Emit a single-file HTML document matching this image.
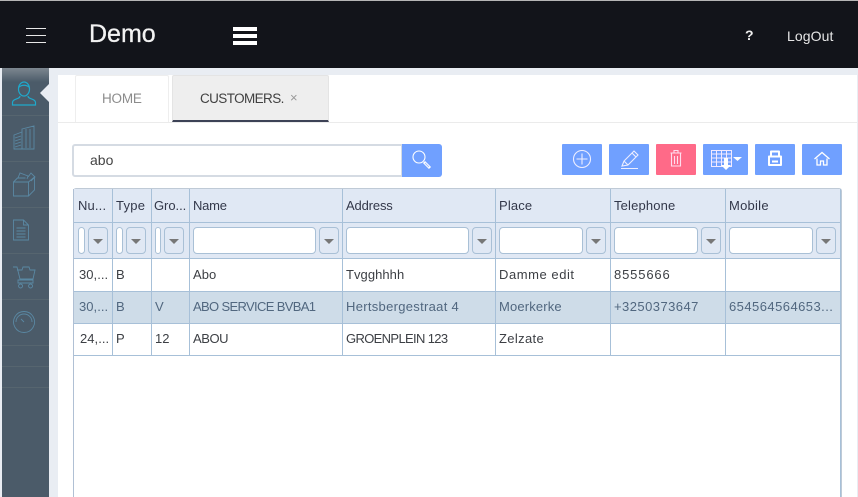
<!DOCTYPE html>
<html><head><meta charset="utf-8"><style>
html,body{margin:0;padding:0;background:#fff}
body{width:858px;height:497px;overflow:hidden;position:relative;font-family:"Liberation Sans",sans-serif;color:#3c3f44}
div,svg,span{position:absolute;box-sizing:border-box}
.t{white-space:nowrap;font-size:13px;line-height:16px}
.h{color:#33384a}
.s{color:#51677f}
.vl{width:1px;background:#a7c0d8;top:189px;height:308px}
.hl{height:1px;background:#a7c0d8;left:74px;width:767px}
.btn{top:144px;height:31px;background:#70a0ff;border-radius:1px}
.f{top:227px;height:27px;background:#fff;border:1px solid #a9c0d6;border-radius:4px}
.d{top:227px;width:20px;height:27px;background:#e0e8f4;border:1px solid #a9c0d6;border-radius:4px}
.d:after{content:"";position:absolute;left:4px;top:11px;border-left:5px solid transparent;border-right:5px solid transparent;border-top:5px solid #777}
.sep{left:2px;width:47px;height:1px;background:#56656f}
svg{overflow:visible}
</style></head><body>
<div style="left:0;top:0;width:858px;height:1px;background:#b5b5b5"></div>
<div style="left:0;top:1px;width:858px;height:67px;background:#12141a"></div>
<div style="left:26px;top:28px;width:20px;height:1px;background:#e8e8e8"></div>
<div style="left:26px;top:35px;width:20px;height:1px;background:#e8e8e8"></div>
<div style="left:26px;top:42px;width:20px;height:1px;background:#e8e8e8"></div>
<div class="t" style="left:89px;top:20px;font-size:25px;line-height:28px;color:#f2f2f2;-webkit-text-stroke:.3px #f2f2f2">Demo</div>
<div style="left:233px;top:27px;width:24px;height:4px;background:#fff"></div>
<div style="left:233px;top:34px;width:24px;height:4px;background:#fff"></div>
<div style="left:233px;top:41px;width:24px;height:4px;background:#fff"></div>
<div class="t" style="left:745px;top:27px;font-size:14px;font-weight:bold;color:#eee">?</div>
<div class="t" style="left:787px;top:28px;font-size:14px;color:#e6e6e6;letter-spacing:.1px">LogOut</div>

<div style="left:0;top:68px;width:858px;height:429px;background:#e9edf3"></div>
<div style="left:2px;top:68px;width:47px;height:429px;background:#4b5b69"></div>
<div style="left:2px;top:68px;width:47px;height:14px;background:linear-gradient(#7d8790,#4b5b69)"></div>
<div class="sep" style="top:115px"></div><div class="sep" style="top:161px"></div><div class="sep" style="top:207px"></div><div class="sep" style="top:253px"></div><div class="sep" style="top:299px"></div><div class="sep" style="top:345px"></div><div class="sep" style="top:366px"></div><div class="sep" style="top:387px"></div>
<div style="left:40px;top:84px;border-top:9px solid transparent;border-bottom:9px solid transparent;border-right:9px solid #e9edf3"></div>

<svg style="left:0;top:68px" width="50" height="300" fill="none" stroke="#5a88a3" stroke-width=".9">
<g stroke="#1fa9cc" stroke-width="1.200"><ellipse cx="24" cy="21" rx="5.500" ry="7"/><path d="M18.500 19.500c3-3 8-3 11 0M20 28c0 3.500-7.500 2.500-7.500 6.500v2.500h23v-2.500c0-4-7.500-3-7.500-6.500"/></g>
<path d="M14 81V67l8-3v17h-8zM22 61l12-3v23H22V61zM15 70l6-2M15 73l6-2M15 76l6-2M15 79l6-2M26 61v19M30 61v19"/>
<path d="M13.500 114v14h15v-14h-15zM28.500 114l6-5v13l-6 6M13.500 114l4-4h8M18 110l2-5 8 3-1 3M28 109l3-4 4 4-4 4"/>
<path d="M13.500 152h10l5 5v15h-15v-20zM23.500 152v5h5M16.500 160h9M16.500 163h9M16.500 166h9M16.500 169h9"/>
<path d="M13 199h4l3 12h13l2-9h-5l-1-3h-6l-1 3h-5M18 212h15v3H18zM20.500 216a2 2 0 1 0 .1 0M30.500 216a2 2 0 1 0 .1 0"/>
<path d="M24 243.500a10.500 10.500 0 1 0 .1 0zM16 254a8 8 0 0 1 16 0M21 251l3 3"/>
</svg>

<div style="left:58px;top:75px;width:799px;height:422px;background:#fff"></div>
<div style="left:58px;top:122px;width:799px;height:1px;background:#ebebeb"></div>
<div style="left:75px;top:75px;width:94px;height:47px;background:#fff;border:1px solid #eee;border-bottom:0;border-radius:2px 2px 0 0"></div>
<div class="t" style="left:102px;top:91px;font-size:13.500px;color:#8c8c8c;letter-spacing:-.2px">HOME</div>
<div style="left:172px;top:75px;width:157px;height:47px;background:#eee;border:1px solid #e4e4e4;border-bottom:2px solid #3d4256;border-radius:2px 2px 0 0"></div>
<div class="t" style="left:200px;top:91px;font-size:13.500px;color:#414141;letter-spacing:-.6px">CUSTOMERS.</div>
<div class="t" style="left:290px;top:90px;font-size:13px;color:#999">×</div>

<div style="left:72px;top:144px;width:331px;height:33px;background:#fff;border:2px solid #d5dbe3;border-radius:3px 0 0 3px"></div>
<div class="t" style="left:90px;top:152px;font-size:14px;color:#444">abo</div>
<div class="btn" style="left:402px;height:33px;width:40px;border-radius:0 3px 3px 0">
<svg style="left:0;top:0" width="40" height="33" fill="none" stroke="#fff"><circle cx="17" cy="13" r="6" stroke-width="1.100"/><path d="M22 18l6 6" stroke-width="3"/><path d="M23 19l4 4" stroke="#9fbfff" stroke-width="1"/></svg></div>

<div class="btn" style="left:562px;width:40px"><svg style="left:0;top:0" width="40" height="31" fill="none" stroke="#eef" stroke-width="1.100"><circle cx="20" cy="15" r="8.500"/><path d="M20 9.500v11M14.500 15h11"/></svg></div>
<div class="btn" style="left:609px;width:40px"><svg style="left:0;top:0" width="40" height="31" fill="none" stroke="#eef" stroke-width="1.100"><path d="M13 22l2-5 10-10 4 4-10 10zM15 17l4 4M23 9l4 4M12 24.500h17"/></svg></div>
<div class="btn" style="left:656px;width:40px;background:#ff6a88"><svg style="left:0;top:0" width="40" height="31" fill="none" stroke="#fde" stroke-width="1.100"><path d="M14.500 9h11M18 9V6.500h4V9M15.500 9v13h9V9M18.500 12v8M21.500 12v8"/></svg></div>
<div class="btn" style="left:703px;width:45px"><svg style="left:0;top:0" width="45" height="31" fill="none" stroke="#f2eaff" stroke-width="1"><path d="M8.500 6.500h20v16h-20zM8.500 10h20M8.500 14h20M8.500 18h20M13.500 6.500v16M18.500 6.500v16M23.500 6.500v16"/><path d="M21 14h4v7h3l-5 5-5-5h3z" fill="#fff" stroke="none"/><path d="M30 13h9l-4.500 4z" fill="#fff" stroke="none"/></svg></div>
<div class="btn" style="left:755px;width:40px"><svg style="left:0;top:0" width="40" height="31" fill="none" stroke="#fff" stroke-width="2" stroke-linejoin="round"><path d="M16 12V7.500h8V12M14 12.500h12v8.500H14zM17 17.500h6"/></svg></div>
<div class="btn" style="left:802px;width:40px"><svg style="left:0;top:0" width="40" height="31" fill="none" stroke="#fff" stroke-width="1.300"><path d="M12.500 15l7.500-6.500 7.500 6.500M15 14.500V21h3.500v-4h3v4H25v-6.500"/></svg></div>

<div style="left:73px;top:188px;width:769px;height:309px;background:#fff;border:1px solid #bfcad6;border-bottom:0;border-radius:3px 3px 0 0"></div>
<div style="left:74px;top:189px;width:766px;height:69px;background:#e0e8f4"></div>
<div style="left:74px;top:292px;width:766px;height:31px;background:#cedce8"></div>
<div style="left:73px;top:189px;width:1px;height:308px;background:#b0c0d4"></div>
<div style="left:840px;top:189px;width:1px;height:308px;background:#a7c0d8"></div>
<div class="hl" style="top:222px"></div><div class="hl" style="top:258px"></div><div class="hl" style="top:291px"></div><div class="hl" style="top:323px"></div><div class="hl" style="top:355px"></div>
<div class="vl" style="left:112px;height:166px"></div><div class="vl" style="left:151px;height:166px"></div><div class="vl" style="left:189px;height:166px"></div><div class="vl" style="left:342px;height:166px"></div><div class="vl" style="left:495px;height:166px"></div><div class="vl" style="left:610px;height:166px"></div><div class="vl" style="left:725px;height:166px"></div>

<div class="t h" style="left:78px;top:198px;letter-spacing:.15px">Nu...</div><div class="t h" style="left:116px;top:198px;letter-spacing:.25px">Type</div><div class="t h" style="left:154px;top:198px;letter-spacing:-.05px">Gro...</div><div class="t h" style="left:193px;top:198px;letter-spacing:-.25px">Name</div><div class="t h" style="left:346px;top:198px;letter-spacing:-.15px">Address</div><div class="t h" style="left:499px;top:198px;letter-spacing:.15px">Place</div><div class="t h" style="left:614px;top:198px;letter-spacing:.15px">Telephone</div><div class="t h" style="left:729px;top:198px;letter-spacing:.25px">Mobile</div>

<div class="f" style="left:78px;width:7px"></div><div class="d" style="left:88px"></div>
<div class="f" style="left:116px;width:7px"></div><div class="d" style="left:126px"></div>
<div class="f" style="left:155px;width:6px"></div><div class="d" style="left:164px"></div>
<div class="f" style="left:193px;width:123px"></div><div class="d" style="left:319px"></div>
<div class="f" style="left:346px;width:123px"></div><div class="d" style="left:472px"></div>
<div class="f" style="left:499px;width:84px"></div><div class="d" style="left:586px"></div>
<div class="f" style="left:614px;width:84px"></div><div class="d" style="left:701px"></div>
<div class="f" style="left:729px;width:84px"></div><div class="d" style="left:816px"></div>

<div class="t" style="left:79px;top:267px;letter-spacing:.05px">30,...</div><div class="t" style="left:116px;top:267px">B</div><div class="t" style="left:193px;top:267px;letter-spacing:.05px">Abo</div><div class="t" style="left:346px;top:267px;letter-spacing:.05px">Tvgghhhh</div><div class="t" style="left:499px;top:267px;letter-spacing:.55px">Damme edit</div><div class="t" style="left:614px;top:267px;letter-spacing:.85px">8555666</div>
<div class="t s" style="left:79px;top:299px;letter-spacing:.05px">30,...</div><div class="t s" style="left:116px;top:299px">B</div><div class="t s" style="left:155px;top:299px">V</div><div class="t s" style="left:193px;top:299px;letter-spacing:-.65px">ABO SERVICE BVBA1</div><div class="t s" style="left:346px;top:299px;letter-spacing:.3px">Hertsbergestraat 4</div><div class="t s" style="left:499px;top:299px;letter-spacing:.15px">Moerkerke</div><div class="t s" style="left:614px;top:299px;letter-spacing:.45px">+3250373647</div><div class="t s" style="left:729px;top:299px;letter-spacing:.45px">654564564653...</div>
<div class="t" style="left:80px;top:331px;letter-spacing:.05px">24,...</div><div class="t" style="left:116px;top:331px">P</div><div class="t" style="left:155px;top:331px">12</div><div class="t" style="left:193px;top:331px;letter-spacing:-.45px">ABOU</div><div class="t" style="left:346px;top:331px;letter-spacing:-.65px">GROENPLEIN 123</div><div class="t" style="left:499px;top:331px;letter-spacing:.35px">Zelzate</div>
</body></html>
